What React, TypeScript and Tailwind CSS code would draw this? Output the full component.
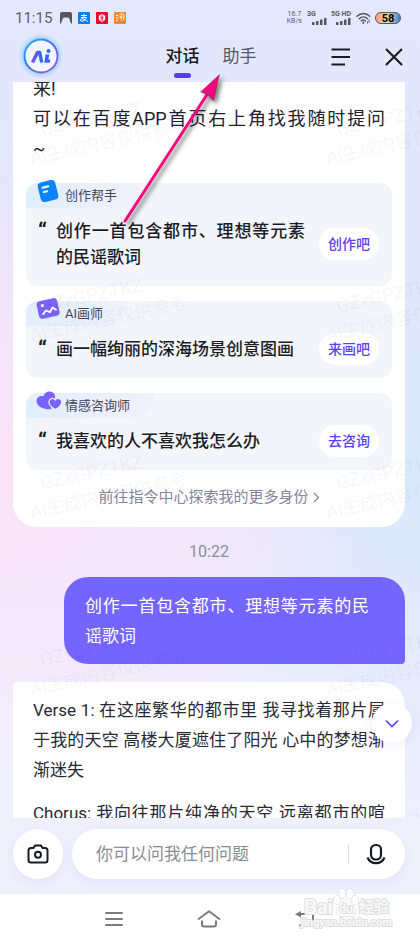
import type { ReactNode } from "react";

const DocIcon = () => (
  <svg width="24" height="24" viewBox="0 0 24 24" aria-hidden="true">
    <g transform="rotate(-14 12 12)">
      <rect x="3" y="2" width="18" height="20" rx="4" fill="#0a84ff" />
      <path d="M7.5 7.5h6M7.5 12h3.5" stroke="#fff" strokeWidth="2" strokeLinecap="round" />
    </g>
  </svg>
);

const PictureIcon = () => (
  <svg width="24" height="24" viewBox="0 0 24 24" aria-hidden="true">
    <g transform="rotate(-12 12 11)">
      <rect x="1.5" y="2.5" width="21" height="18" rx="3.5" fill="#7b61ff" />
      <circle cx="7" cy="7.5" r="1.6" fill="#fff" />
      <path
        d="M6 16l3.500-3 3.500 2.500 3.500-4 3 3"
        fill="none"
        stroke="#fff"
        strokeWidth="1.8"
        strokeLinecap="round"
        strokeLinejoin="round"
      />
    </g>
  </svg>
);

const HeartsIcon = () => (
  <svg width="26" height="22" viewBox="0 0 26 22" aria-hidden="true">
    <path
      d="M15 20.200C8 20.600.5 17.500.500 12.200.500 8.600 3.800 6.600 7.500 7.200 8.500 3.800 11.200 2.300 14 2.600c3.400.300 5.400 3 5.200 6.400z"
      fill="#7b61ff"
    />
    <path
      d="M19.300 20.500c-3.300-1.600-6.600-4.600-6.300-8 .300-3 4.200-4.300 6.300-1.600 2-2.700 6.100-1.400 6.400 1.600.300 3.400-3.100 6.400-6.400 8z"
      fill="#7b61ff"
      stroke="#e9effc"
      strokeWidth="1.300"
    />
  </svg>
);

const SignalIcon = () => (
  <svg width="15" height="7" viewBox="0 0 15 7" fill="#55575f" aria-hidden="true">
    <rect x="0" y="4" width="2.500" height="3" rx=".6" />
    <rect x="4" y="3" width="2.500" height="4" rx=".6" />
    <rect x="8" y="1.500" width="2.500" height="5.500" rx=".6" />
    <rect x="12" y="0" width="2.500" height="7" rx=".6" />
  </svg>
);

const StatusBar = () => (
  <div className="flex h-9 items-center pl-[15px] pr-[19px] text-[#5b5d66]">
    <span className="w-[45px] text-[15px] leading-none">11:15</span>
    <div className="flex gap-[6px]">
      <svg width="12" height="12" viewBox="0 0 12 12" aria-hidden="true">
        <path d="M0 2a2 2 0 012-2h8a2 2 0 012 2v10c-1.500-1-2-2-2.300-4.500L8.500 5.500h-5L2.300 7.500C2 10 1.500 11 0 12z" fill="#55575f" />
      </svg>
      <svg width="12" height="12" viewBox="0 0 12 12" aria-hidden="true">
        <rect width="12" height="12" rx="1" fill="#0b7cf0" />
        <path d="M3 3.500h6M6 1.800v3.700M3 5.500h5.500C7.500 8 5 9.800 3 9c-1.200-.7-.5-2.200 1-2.200 2 0 4 1.600 6 2.700" fill="none" stroke="#fff" />
      </svg>
      <svg width="12" height="12" viewBox="0 0 12 12" aria-hidden="true">
        <rect width="12" height="12" rx="1" fill="#f5002d" />
        <path d="M6 2l3.200 1.800v4L6 10 2.800 7.800v-4z" fill="#fff" />
        <path d="M6 3v6M4.200 5.200h3.600M4.600 7h2.800" stroke="#f5002d" strokeWidth=".8" />
      </svg>
      <svg width="12" height="12" viewBox="0 0 12 12" aria-hidden="true">
        <rect width="12" height="12" rx="1" fill="#f98b2b" />
        <path d="M2 3.500h2M2 6h2M2 9l2-1M5.500 2.500C8 1.500 10.500 2 10 5c-.3 2.500-1 4-2.500 3.500M5.500 5h3M7 3.500V7" fill="none" stroke="#fff" />
        <path d="M3 10.500l2-2M8 10l2-1" stroke="#4486d8" />
      </svg>
    </div>
    <div className="ml-auto flex items-center">
      <div className="mr-[5px] text-center text-[7px] leading-[7px]">
        16.7
        <br />
        KB/s
      </div>
      <div className="mr-1 flex flex-col items-end">
        <span className="w-full text-[7px] font-bold leading-[7px]">3G</span>
        <span className="flex h-[7px] pl-[5px]"><SignalIcon /></span>
      </div>
      <div className="mr-[5px] flex flex-col items-end">
        <span className="text-[7px] font-bold leading-[7px]">5G HD</span>
        <span className="flex h-[7px]"><SignalIcon /></span>
      </div>
      <svg className="mr-1" width="15" height="12" viewBox="0 0 15 12" aria-hidden="true">
        <path d="M1 4.300C4.800.600 10 .600 13.700 4.300M3.200 6.700c2.500-2.300 6-2.300 8.300 0M5.200 9c1.300-1.200 3-1.200 4.200 0" fill="none" stroke="#55575f" strokeWidth="1.500" strokeLinecap="round" />
        <circle cx="7.300" cy="10.800" r="1.100" fill="#55575f" />
        <path d="M13 7.500v3M11.500 9.500v2" stroke="#55575f" />
      </svg>
      <span className="flex h-3 w-[26px] items-center justify-center rounded-full border border-[#55575f] bg-linear-to-r from-[#f8a48c] via-[#f5d48c] to-[#3f7fd0] text-[11px] font-bold leading-none text-black">
        58
      </span>
    </div>
  </div>
);

const Logo = () => (
  <svg width="44" height="44" viewBox="0 0 44 44" role="img" aria-label="AI">
    <defs>
      <linearGradient id="ring" x1="0" y1="0" x2="1" y2="1">
        <stop offset="0" stopColor="#12b5ff" />
        <stop offset=".5" stopColor="#4a6bf5" />
        <stop offset="1" stopColor="#a05ce0" />
      </linearGradient>
      <linearGradient id="mark" x1="0" y1="0" x2="1" y2="0">
        <stop offset="0" stopColor="#7a4bf8" />
        <stop offset="1" stopColor="#2b6cf5" />
      </linearGradient>
    </defs>
    <circle cx="22" cy="22" r="22" fill="#cfe2fb" />
    <circle cx="22" cy="22" r="19.500" fill="#b8d6fa" />
    <circle cx="22" cy="22" r="16.500" fill="#f3f5ff" stroke="url(#ring)" strokeWidth="2" />
    <g fill="none" stroke="url(#mark)" strokeWidth="3.400" strokeLinejoin="round">
      <path d="M13.500 28.500l5-10h2.200l2 10" />
      <path d="M16 27h4" strokeWidth="2.600" />
    </g>
    <path d="M26.500 20.500h3.800l-.9 5h1.900l-.6 3.300h-5.300z" fill="#3a63f6" />
    <circle cx="29.500" cy="17" r="2.100" fill="#2b6cf5" />
  </svg>
);

const Header = () => (
  <header className="flex h-[46px] items-start pl-[15px] pr-[17px]">
    <div className="-mt-[2px] flex-1 pl-1">
      <Logo />
    </div>
    <nav className="flex h-[42px] items-center gap-[23px] text-[17px]">
      <button className="relative font-medium text-[#16171f]">
        对话
        <span className="absolute inset-x-0 -bottom-2 mx-auto h-[5px] w-[17px] rounded-full bg-[#573df2]" />
      </button>
      <button className="text-[#55576a]">助手</button>
    </nav>
    <div className="flex h-[42px] flex-1 items-center justify-end gap-[34px]">
      <button aria-label="菜单">
        <svg width="20" height="18" viewBox="0 0 20 18" aria-hidden="true">
          <path d="M.5 1.500h18.500M.5 9h18.500M.5 16.500H14" stroke="#1b1c22" strokeWidth="2.200" />
        </svg>
      </button>
      <button aria-label="关闭">
        <svg width="18" height="18" viewBox="0 0 18 18" aria-hidden="true">
          <path d="M1 1l16 16M17 1L1 17" stroke="#1b1c22" strokeWidth="2.200" />
        </svg>
      </button>
    </div>
  </header>
);

type RoleCardProps = {
  icon: ReactNode;
  role: string;
  prompt: string;
  action: string;
};

const RoleCard = ({ icon, role, prompt, action }: RoleCardProps) => (
  <section className="rounded-xl bg-[#f4f5fa]">
    <div className="flex h-[25px] w-fit items-start rounded-tl-xl rounded-br-[24px] bg-linear-to-r from-[#e0eefd] to-[#f1f1fb] pl-[10px] pr-6">
      <span className="-mt-1 flex w-[29px] shrink-0">{icon}</span>
      <h2 className="text-[13px] leading-[25px] text-[#44465a]">{role}</h2>
    </div>
    <div className="flex items-center pb-4 pl-3 pr-[13px] pt-[10px]">
      <span className="w-[18px] shrink-0 self-start text-[22px] font-bold leading-[26px] text-[#1b1d26]">“</span>
      <p className="flex-1 text-justify text-[17px] font-medium leading-[26px] text-[#1b1d26]">{prompt}</p>
      <button className="-my-[3px] ml-[14px] h-8 w-[60px] shrink-0 rounded-full bg-white text-[14px] font-medium text-[#5a3ff5]">
        {action}
      </button>
    </div>
  </section>
);

const roles: RoleCardProps[] = [
  { icon: <DocIcon />, role: "创作帮手", prompt: "创作一首包含都市、理想等元素的民谣歌词", action: "创作吧" },
  { icon: <PictureIcon />, role: "AI画师", prompt: "画一幅绚丽的深海场景创意图画", action: "来画吧" },
  { icon: <HeartsIcon />, role: "情感咨询师", prompt: "我喜欢的人不喜欢我怎么办", action: "去咨询" },
];

// The stamps repeat over the whole chat, above the messages.
const Watermarks = () => (
  <div className="pointer-events-none absolute inset-x-0 top-0 grid h-[885px] w-[592px] grid-cols-2 text-black/5" aria-hidden="true">
    {Array.from({ length: 10 }, (_, i) => (
      <div key={i} className="h-[177px] pl-[26px] pt-[22px]">
        <div className="w-40 -rotate-12 whitespace-nowrap">
          <div className="pl-4 text-[19px] leading-6">GZxGPZTKZ</div>
          <div className="text-[18px] leading-7">AI生成内容仅供参考</div>
        </div>
      </div>
    ))}
  </div>
);

const Chat = () => (
  <main className="relative min-h-0 flex-1 overflow-hidden">
    <div className="-mt-2 flex flex-col pl-[13px] pr-[15px]">
      <article className="rounded-b-[24px] bg-white px-[13px] pb-[19px]">
        <div className="px-[7px] text-[18px] leading-[30px] text-[#1f212b]">
          <p>来!</p>
          <p className="[text-align-last:justify]">可以在百度APP首页右上角找我随时提问</p>
          <p>~</p>
        </div>
        <div className="mt-[19px] flex flex-col gap-[15px]">
          {roles.map((item) => (
            <RoleCard key={item.role} {...item} />
          ))}
        </div>
        <a href="#roles" className="mt-4 flex items-center justify-center text-[15px] leading-[22px] text-[#83859a]">
          前往指令中心探索我的更多身份
          <svg className="ml-1" width="7" height="11" viewBox="0 0 7 11" fill="none" aria-hidden="true">
            <path d="M1 1l4.500 4.500L1 10" stroke="#83859a" strokeWidth="1.200" />
          </svg>
        </a>
      </article>
      <time className="text-center text-base leading-[50px] text-[#8b8da0]">10:22</time>
      <p className="ml-[51px] rounded-[24px] rounded-br bg-[#7565ff] pb-[13px] pl-[21px] pr-9 pt-[14px] text-justify text-[17px] leading-[30px] text-white">
        创作一首包含都市、理想等元素的民谣歌词
      </p>
      <article className="mt-[18px] flex flex-col gap-[13px] rounded-tl rounded-tr-[24px] bg-white px-5 py-[13px] text-justify text-[17px] leading-[30px] text-[#272a36]">
        <p>Verse 1: 在这座繁华的都市里 我寻找着那片属于我的天空 高楼大厦遮住了阳光 心中的梦想渐渐迷失</p>
        <p>Chorus: 我向往那片纯净的天空 远离都市的喧嚣</p>
      </article>
    </div>
    <Watermarks />
    <button
      aria-label="回到底部"
      className="absolute bottom-[75px] right-2 flex size-10 items-center justify-center rounded-full bg-white shadow-[0_2px_12px_rgba(110,90,255,0.1)]"
    >
      <svg width="14" height="9" viewBox="0 0 14 9" fill="none" aria-hidden="true">
        <path d="M1 1.500l6 6 6-6" stroke="#5a3ff5" strokeWidth="1.600" />
      </svg>
    </button>
  </main>
);

const Composer = () => (
  <form className="flex gap-[9px] pb-[15px] pl-[13px] pr-[15px] pt-[11px]">
    <button
      type="button"
      aria-label="拍照"
      className="flex size-[50px] shrink-0 items-center justify-center rounded-full bg-white shadow-[0_4px_12px_rgba(110,90,255,0.08)]"
    >
      <svg width="22" height="20" viewBox="0 0 22 20" fill="none" stroke="#1b1c22" strokeWidth="2" aria-hidden="true">
        <path d="M4 4h2.500l1.500-2.500h6L15.500 4H18a2.500 2.500 0 012.500 2.500V16a2.500 2.500 0 01-2.500 2.500H4A2.500 2.500 0 011.500 16V6.500A2.500 2.500 0 014 4z" strokeLinejoin="round" />
        <circle cx="11" cy="10.700" r="3" />
      </svg>
    </button>
    <div className="flex h-[50px] min-w-0 flex-1 items-center rounded-full bg-white pl-6 pr-[19px] shadow-[0_4px_12px_rgba(110,90,255,0.08)]">
      <input
        type="text"
        aria-label="提问"
        placeholder="你可以问我任何问题"
        className="h-full min-w-0 flex-1 bg-transparent text-[17px] text-[#1f212b] outline-none placeholder:text-[#8c8c90]"
      />
      <span className="h-5 w-px bg-[#dcdce2]" />
      <button type="button" aria-label="语音输入" className="ml-[17px]">
        <svg width="20" height="22" viewBox="0 0 20 22" fill="none" stroke="#1b1c22" strokeWidth="2.200" aria-hidden="true">
          <rect x="5" y="2" width="10" height="14.500" rx="4.500" />
          <path d="M1.500 14.500c1.500 3.500 4.500 5.700 8.500 5.700s7-2.200 8.500-5.700" />
        </svg>
      </button>
    </div>
  </form>
);

const SystemNav = () => (
  <footer className="relative flex h-[46px] items-center bg-white pt-1">
    <div className="flex flex-1 items-center justify-center gap-[74px]">
      <button aria-label="最近任务">
        <svg width="18" height="16" viewBox="0 0 18 16" aria-hidden="true">
          <path d="M1 2h16M1 8h16M1 14h16" stroke="#7b7b7d" strokeWidth="2" strokeLinecap="round" />
        </svg>
      </button>
      <button aria-label="主屏幕">
        <svg width="24" height="18" viewBox="0 0 24 18" fill="none" stroke="#7b7b7d" strokeWidth="2" aria-hidden="true">
          <path d="M1 9.500L12 1.300l11 8.200M5 10.500v4a2 2 0 002 2h10a2 2 0 002-2v-4" strokeLinejoin="round" />
        </svg>
      </button>
      <button aria-label="返回">
        <svg width="20" height="16" viewBox="0 0 20 16" fill="none" aria-hidden="true">
          <path d="M5 3h13v11.500H4" stroke="#7b7b7d" strokeWidth="2" />
          <path d="M0 3.200L6 0v6.400z" fill="#7b7b7d" />
        </svg>
      </button>
    </div>
    <div className="absolute bottom-3 right-7 flex flex-col items-center font-bold text-white/80 [-webkit-text-stroke:2px_#dedee0] [paint-order:stroke_fill]">
      <div className="flex items-end text-[20px] leading-[22px]">
        Bai
        <span className="relative flex w-[26px] justify-center text-[12px] leading-[18px]">
          <svg className="absolute -top-3 left-0" width="26" height="30" viewBox="0 0 26 30" fill="#fff" stroke="#d3d3d5" aria-hidden="true">
            <ellipse cx="3.800" cy="12" rx="3.200" ry="4.200" />
            <ellipse cx="9.300" cy="5.500" rx="3.300" ry="4.700" />
            <ellipse cx="16.700" cy="5.500" rx="3.300" ry="4.700" />
            <ellipse cx="22.200" cy="12" rx="3.200" ry="4.200" />
            <path d="M13 12c3.500 0 4.500 3.500 7 6 4 4 3 10-2 10.500-2 .2-3-.5-5-.5s-3 .7-5 .5c-5-.5-6-6.500-2-10.500 2.500-2.500 3.500-6 7-6z" />
          </svg>
          <span className="relative">du</span>
        </span>
        <span className="text-[15px]">经验</span>
      </div>
      <div className="text-[11px] leading-[10px]">jingyan.baidu.com</div>
    </div>
  </footer>
);

// Pointer drawn from the first role card up to the second tab.
const Arrow = () => (
  <svg
    className="pointer-events-none absolute left-1/2 top-[70px] -ml-[90px] drop-shadow-[3px_3px_2px_rgba(0,0,0,0.5)]"
    width="104"
    height="156"
    viewBox="0 0 104 156"
    aria-hidden="true"
  >
    <path d="M5 151L90 20" stroke="#f9057f" strokeWidth="3" strokeLinecap="round" />
    <path d="M99.500 4.500L93.500 31 87.500 24.500 80.500 22z" fill="#f9057f" stroke="#444" strokeWidth=".4" />
  </svg>
);

export default function App() {
  return (
    <div className="relative flex h-screen flex-col overflow-hidden bg-[radial-gradient(90%_32%_at_0%_50%,#fbe4f8,transparent),radial-gradient(60%_40%_at_100%_50%,#dae9fc,transparent),linear-gradient(#e3e8fc,#e9e5f8_45%,#f0effc_75%,#f0effc)] font-[Roboto,'Noto_Sans_CJK_SC',sans-serif]">
      <StatusBar />
      <Header />
      <Chat />
      <Composer />
      <SystemNav />
      <Arrow />
    </div>
  );
}
